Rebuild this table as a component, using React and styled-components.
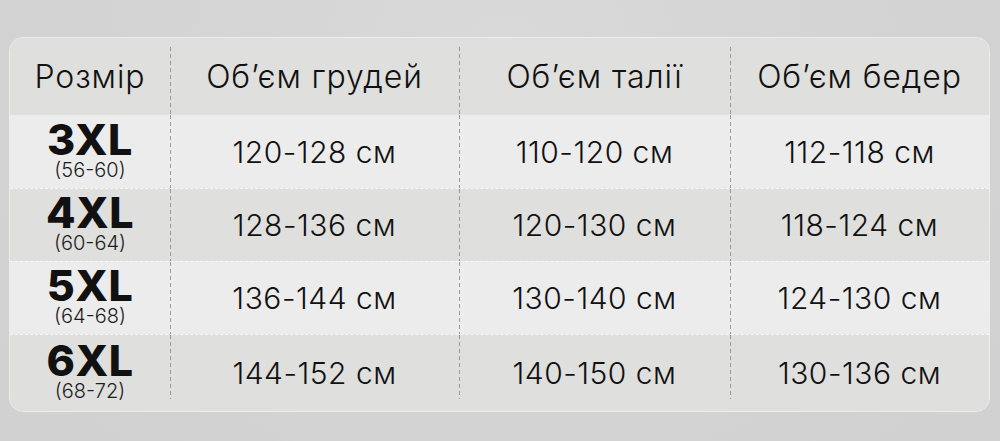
import React from "react";
import styled, { createGlobalStyle } from "styled-components";

const GlobalStyle = createGlobalStyle`
  html, body {
    margin: 0;
    padding: 0;
  }
  body {
    width: 1000px;
    height: 441px;
    overflow: hidden;
    background: radial-gradient(ellipse at 50% 10%, #d9d9d9 0%, #d3d3d3 60%, #d1d1d1 100%);
    font-family: Inter, "Noto Sans", sans-serif;
    color: #111;
  }
`;

const Page = styled.div`
  padding: 37px 10px 0 9px;
`;

const Card = styled.div`
  width: 981px;
  height: 375px;
  box-sizing: border-box;
  border: 1.5px solid #ededed;
  border-radius: 14px;
  background: #dfdfde;
  overflow: hidden;
  display: flex;
  flex-direction: column;
`;

const COLS = "160px 289px 271px 1fr";

const Row = styled.div`
  display: grid;
  grid-template-columns: ${COLS};
  height: ${(p) => p.$h}px;
  flex: ${(p) => (p.$grow ? 1 : "none")};
  background: ${(p) => (p.$light ? "#ececec" : "#dfdfde")};
  border-top: ${(p) => (p.$first ? "none" : "1px dashed #f6f6f6")};
  box-sizing: border-box;
`;

const dash = "repeating-linear-gradient(to bottom, #9a9a9a 0 4px, transparent 4px 7px)";

const Cell = styled.div`
  display: flex;
  flex-direction: column;
  align-items: center;
  justify-content: center;
  background-image: ${(p) => (p.$divider ? dash : "none")};
  background-repeat: no-repeat;
  background-size: ${(p) =>
    p.$pos === "top" ? "1px calc(100% - 9px)" : p.$pos === "bottom" ? "1px calc(100% - 12px)" : "1px calc(100% + 1px)"};
  background-position: ${(p) => (p.$pos === "top" ? "left 0 top 9px" : "left 0 top 0")};
`;

const HeadText = styled.span`
  font-size: 32px;
  font-weight: 300;
  letter-spacing: 0.9px;
`;

const Value = styled.span`
  font-size: 30px;
  font-weight: 300;
  letter-spacing: 0.5px;
`;

const SizeName = styled.span`
  font-size: 43px;
  font-weight: 800;
  line-height: 32px;
  letter-spacing: 0.5px;
`;

const SizeRange = styled.span`
  margin-top: 4px;
  font-size: 20px;
  font-weight: 300;
  line-height: 22px;
  color: #1c1c1c;
`;

const headers = ["Розмір", "Об’єм грудей", "Об’єм талії", "Об’єм бедер"];

const rows = [
  { size: "3XL", range: "(56-60)", values: ["120-128 см", "110-120 см", "112-118 см"] },
  { size: "4XL", range: "(60-64)", values: ["128-136 см", "120-130 см", "118-124 см"] },
  { size: "5XL", range: "(64-68)", values: ["136-144 см", "130-140 см", "124-130 см"] },
  { size: "6XL", range: "(68-72)", values: ["144-152 см", "140-150 см", "130-136 см"] },
];

export default function App() {
  return (
    <>
      <GlobalStyle />
      <Page>
        <Card>
          <Row $h={77} $first>
            {headers.map((h, i) => (
              <Cell key={h} $divider={i > 0} $pos="top">
                <HeadText>{h}</HeadText>
              </Cell>
            ))}
          </Row>
          {rows.map((r, idx) => {
            const last = idx === rows.length - 1;
            return (
              <Row key={r.size} $h={73} $grow={last} $light={idx % 2 === 0} $first={idx === 0}>
                <Cell>
                  <SizeName>{r.size}</SizeName>
                  <SizeRange>{r.range}</SizeRange>
                </Cell>
                {r.values.map((v, i) => (
                  <Cell key={i} $divider $pos={last ? "bottom" : "mid"}>
                    <Value>{v}</Value>
                  </Cell>
                ))}
              </Row>
            );
          })}
        </Card>
      </Page>
    </>
  );
}
